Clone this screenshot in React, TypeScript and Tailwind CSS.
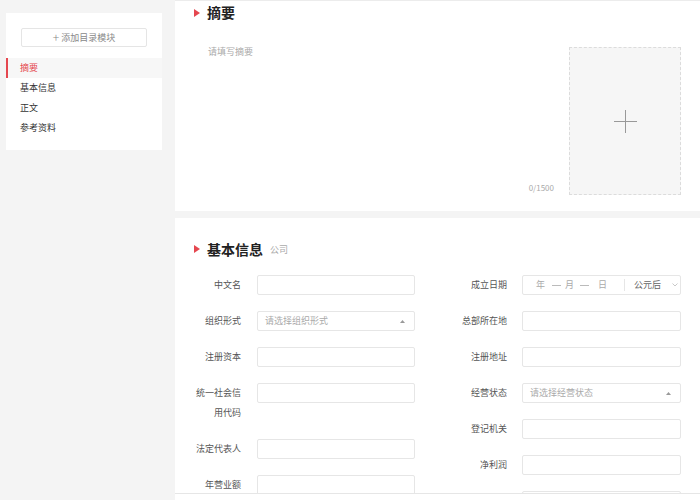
import React from "react";

const leftFields = [
  { label: "中文名", type: "input" },
  { label: "组织形式", type: "select", placeholder: "请选择组织形式" },
  { label: "注册资本", type: "input" },
  { label: "统一社会信用代码", type: "input" },
  { label: "法定代表人", type: "input" },
  { label: "年营业额", type: "input" },
];

const rightFields = [
  { label: "成立日期", type: "date" },
  { label: "总部所在地", type: "input" },
  { label: "注册地址", type: "input" },
  { label: "经营状态", type: "select", placeholder: "请选择经营状态" },
  { label: "登记机关", type: "input" },
  { label: "净利润", type: "input" },
  { label: "", type: "input" },
];

const navItems = ["摘要", "基本信息", "正文", "参考资料"];

function Triangle() {
  return (
    <svg width="6" height="8" viewBox="0 0 6 8" className="shrink-0">
      <path d="M0 0 L6 4 L0 8 Z" fill="#e5474f" />
    </svg>
  );
}

function Field({ field, inputWidth, gap }: { field: { label: string; type: string; placeholder?: string }; inputWidth: string; gap: string }) {
  return (
    <div className="flex items-start">
      <div className="w-[52px] shrink-0 text-right text-[9px] leading-[20px] text-[#555]">{field.label}</div>
      <div className={`${gap} ${inputWidth} h-[20px] shrink-0 border border-[#e6e6e6] rounded-[2px] bg-white flex items-center text-[9px]`}>
        {field.type === "select" && (
          <>
            <span className="pl-[7px] text-[#aaa] flex-1">{field.placeholder}</span>
            <svg width="5" height="3" viewBox="0 0 5 3" className="mr-[9px]">
              <path d="M0 3 L2.5 0 L5 3 Z" fill="#999" />
            </svg>
          </>
        )}
        {field.type === "date" && (
          <>
            <span className="ml-[13px] text-[#aaa]">年</span>
            <div className="ml-[7px] w-[9px] h-px bg-[#bbb]" />
            <span className="ml-[4px] text-[#aaa]">月</span>
            <div className="ml-[6px] w-[9px] h-px bg-[#bbb]" />
            <span className="ml-[9px] text-[#aaa]">日</span>
            <div className="ml-[17px] w-px h-[12px] bg-[#e6e6e6]" />
            <span className="ml-[9px] text-[#666]">公元后</span>
            <svg width="6" height="4" viewBox="0 0 6 4" className="ml-[11px]">
              <path d="M0.5 0.5 L3 3 L5.5 0.5" fill="none" stroke="#bbb" strokeWidth="0.8" />
            </svg>
          </>
        )}
      </div>
    </div>
  );
}

export default function App() {
  return (
    <div className="h-[500px] overflow-hidden bg-[#f4f4f4] flex font-['Noto_Sans_CJK_SC','Noto_Sans',sans-serif] text-[#333]">
      {/* Sidebar */}
      <div className="pl-[6px] pt-[13px] w-[175px] shrink-0">
        <div className="w-[156px] h-[137px] bg-white pt-[15px]">
          <div className="mx-[15px] h-[19px] border border-[#e5e5e5] rounded-[2px] flex items-center justify-center text-[9px] text-[#888]">
            <span className="text-[12px] leading-none font-light mr-[2px] -mt-px">+</span>
            添加目录模块
          </div>
          <div className="mt-[11px]">
            {navItems.map((item, i) => (
              <div
                key={item}
                className={`relative h-[20px] flex items-center pl-[14px] text-[9px] ${
                  i === 0 ? "bg-[#f7f7f7] text-[#e5474f]" : "text-[#333]"
                }`}
              >
                {i === 0 && <div className="absolute left-0 top-0 bottom-0 w-[2px] bg-[#e5474f]" />}
                {item}
              </div>
            ))}
          </div>
        </div>
      </div>

      {/* Main */}
      <div className="flex-1 flex flex-col gap-[7px]">
        {/* 摘要 */}
        <div className="bg-white border-t border-[#ececec] h-[211px] shrink-0">
          <div className="h-[23px] flex items-center pl-[19px] gap-[7px]">
            <Triangle />
            <span className="text-[14px] font-bold text-[#222]">摘要</span>
          </div>
          <div className="mt-[22px] flex pl-[33px] pr-[19px]">
            <div className="flex-1 flex flex-col justify-between mr-[15px] h-[149px]">
              <div className="text-[9px] text-[#aaa] leading-[12px]">请填写摘要</div>
              <div className="text-right text-[8px] text-[#aaa] leading-[10px] mb-[2px]">0/1500</div>
            </div>
            <div className="mt-px w-[112px] h-[148px] bg-[#f6f6f6] border border-dashed border-[#dcdcdc] flex items-center justify-center">
              <svg width="23" height="23" viewBox="0 0 23 23">
                <path d="M11.5 0 V23 M0 11.5 H23" stroke="#999" strokeWidth="1" />
              </svg>
            </div>
          </div>
        </div>

        {/* 基本信息 */}
        <div className="bg-white flex-1 pt-[21px]">
          <div className="h-[20px] flex items-center pl-[19px]">
            <Triangle />
            <span className="ml-[7px] text-[14px] font-bold text-[#222]">基本信息</span>
            <span className="ml-[7px] text-[9px] text-[#aaa] mt-[2px]">公司</span>
          </div>
          <div className="mt-[16px] pl-[14px] flex gap-[40px]">
            <div className="flex flex-col gap-[16px]">
              {leftFields.map((f) => (
                <Field key={f.label} field={f} inputWidth="w-[158px]" gap="ml-[16px]" />
              ))}
            </div>
            <div className="flex flex-col gap-[16px]">
              {rightFields.map((f, i) => (
                <Field key={i} field={f} inputWidth="w-[159px]" gap="ml-[15px]" />
              ))}
            </div>
          </div>
        </div>
      </div>

      {/* bottom bar */}
      <div className="fixed bottom-0 left-[175px] right-0 h-[7px] bg-white border-t border-[#e6e6e6]" />
    </div>
  );
}
